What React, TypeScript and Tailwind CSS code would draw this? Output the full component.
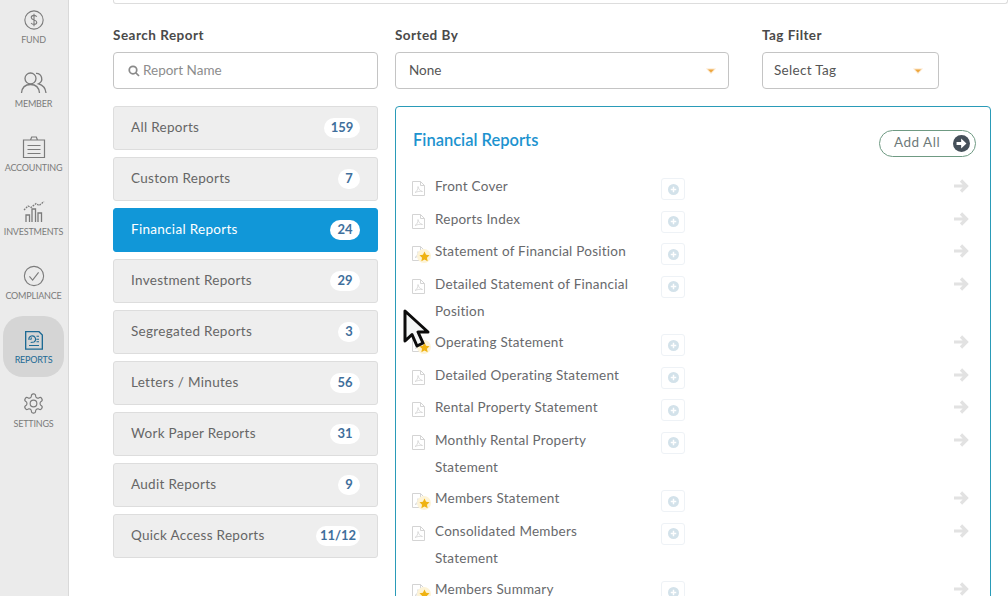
import { ReactNode } from 'react';

const font = { fontFamily: '"Lato", "Open Sans", sans-serif' };

type NavItem = { label: string; icon: ReactNode; active?: boolean };

const navItems: NavItem[] = [
  {
    label: 'FUND',
    icon: (
      <svg viewBox="0 0 24 24" className="h-[22px] w-[22px]" fill="none" stroke="currentColor" strokeWidth="1.2">
        <circle cx="12" cy="12" r="10" />
        <path d="M15 8.5c-.6-1-1.7-1.5-3-1.5-1.700 0-3 .9-3 2.400 0 3.200 6 1.800 6 5 0 1.500-1.300 2.400-3 2.400-1.400 0-2.500-.6-3.100-1.600M12 5.200v13.600" />
      </svg>
    ),
  },
  {
    label: 'MEMBER',
    icon: (
      <svg viewBox="0 0 28 24" className="h-[24px] w-[28px]" fill="none" stroke="currentColor" strokeWidth="1.3">
        <circle cx="10.500" cy="7.500" r="5.500" />
        <path d="M1.500 22c.5-5.500 4-8.500 9-8.500s8.500 3 9 8.500" />
        <path d="M16 2.300a5.500 5.500 0 0 1 2.500 10.500c4 1 7 4.200 7.500 9.200" />
      </svg>
    ),
  },
  {
    label: 'ACCOUNTING',
    icon: (
      <svg viewBox="0 0 24 24" className="h-[24px] w-[24px]" fill="none" stroke="currentColor" strokeWidth="1.2">
        <path d="M1.500 5h21v17.500h-21zM8.500 5l1.200-3h4.600l1.200 3M5.500 10.500h13M5.500 14.500h13M5.500 18.500h13" />
      </svg>
    ),
  },
  {
    label: 'INVESTMENTS',
    icon: (
      <svg viewBox="0 0 24 24" className="h-[24px] w-[24px]" fill="none" stroke="currentColor" strokeWidth="1.300">
        <path d="M4 23v-7h3.500v7M10 23V10h3.500v13M16 23v-9h3.500v9" />
        <path d="M2 11l4-4 3 1.500 5-4 3 2 5-4" strokeDasharray="1.800 1" />
      </svg>
    ),
  },
  {
    label: 'COMPLIANCE',
    icon: (
      <svg viewBox="0 0 24 24" className="h-[22px] w-[22px]" fill="none" stroke="currentColor" strokeWidth="1.200">
        <circle cx="12" cy="12" r="10.500" />
        <path d="M7 12.500l3.500 4L17 8" />
      </svg>
    ),
  },
  {
    label: 'REPORTS',
    active: true,
    icon: (
      <svg viewBox="0 0 24 24" className="h-[22px] w-[20px]" fill="none" stroke="currentColor" strokeWidth="1.600">
        <path d="M2 2h16l4 4v17H2z" />
        <path d="M6 12a4 4 0 1 1 6 2.500L8 15M9 9l-1 3M15 7.500h3M15 11h3M15 14h3M6 18.500h12" strokeWidth="1.300" />
      </svg>
    ),
  },
  {
    label: 'SETTINGS',
    icon: (
      <svg viewBox="0 0 24 24" className="h-[23px] w-[23px]" fill="none" stroke="currentColor" strokeWidth="1.200" strokeLinecap="round" strokeLinejoin="round">
        <path d="M12.220 2h-.44a2 2 0 0 0-2 2v.18a2 2 0 0 1-1 1.730l-.43.25a2 2 0 0 1-2 0l-.15-.08a2 2 0 0 0-2.730.73l-.22.380a2 2 0 0 0 .73 2.730l.15.1a2 2 0 0 1 1 1.720v.51a2 2 0 0 1-1 1.740l-.15.09a2 2 0 0 0-.73 2.730l.22.380a2 2 0 0 0 2.730.73l.15-.08a2 2 0 0 1 2 0l.43.25a2 2 0 0 1 1 1.730V20a2 2 0 0 0 2 2h.44a2 2 0 0 0 2-2v-.18a2 2 0 0 1 1-1.730l.43-.25a2 2 0 0 1 2 0l.15.08a2 2 0 0 0 2.730-.73l.22-.390a2 2 0 0 0-.73-2.730l-.15-.08a2 2 0 0 1-1-1.740v-.5a2 2 0 0 1 1-1.740l.15-.09a2 2 0 0 0 .73-2.730l-.22-.380a2 2 0 0 0-2.730-.73l-.15.08a2 2 0 0 1-2 0l-.43-.25a2 2 0 0 1-1-1.730V4a2 2 0 0 0-2-2z" />
        <circle cx="12" cy="12" r="3.500" />
      </svg>
    ),
  },
];

const categories = [
  { name: 'All Reports', count: '159', badge: 'w-[36px]' },
  { name: 'Custom Reports', count: '7', badge: 'w-[22px]' },
  { name: 'Financial Reports', count: '24', active: true, badge: 'w-[30px]' },
  { name: 'Investment Reports', count: '29', badge: 'w-[30px]' },
  { name: 'Segregated Reports', count: '3', badge: 'w-[22px]' },
  { name: 'Letters / Minutes', count: '56', badge: 'w-[30px]' },
  { name: 'Work Paper Reports', count: '31', badge: 'w-[30px]' },
  { name: 'Audit Reports', count: '9', badge: 'w-[22px]' },
  { name: 'Quick Access Reports', count: '11/12', badge: 'w-[44px]' },
];

const reports = [
  { name: 'Front Cover' },
  { name: 'Reports Index' },
  { name: 'Statement of Financial Position', star: true },
  { name: 'Detailed Statement of Financial Position' },
  { name: 'Operating Statement', star: true },
  { name: 'Detailed Operating Statement' },
  { name: 'Rental Property Statement' },
  { name: 'Monthly Rental Property Statement' },
  { name: 'Members Statement', star: true },
  { name: 'Consolidated Members Statement' },
  { name: 'Members Summary', star: true },
];

function Caret() {
  return (
    <svg viewBox="0 0 10 6" className="h-[6px] w-[10px]">
      <path d="M0 .5h10L5 6z" fill="#fbe3c4" />
      <path d="M2 1.500h6L5 4.500z" fill="#eda63c" />
    </svg>
  );
}

function PdfIcon({ star }: { star?: boolean }) {
  return (
    <div className="relative mt-[8px] h-[15px] w-[13px] shrink-0">
      <svg viewBox="0 0 13 15" className="h-[15px] w-[13px]" fill="none" stroke="#d4d4d4" strokeWidth="1">
        <path d="M.5.5h8l4 4v10H.500zM8.500.500v4h4" />
        <path d="M3 11.500c2-1 3-3.500 3-6 .5 2.500 2 4.500 4.500 5-2.500-.5-5 0-7.500 1z" strokeWidth=".8" />
      </svg>
      {star && (
        <div className="absolute left-[5px] top-[3px] flex h-[14px] w-[14px] items-center justify-center rounded-full bg-[#fdf3d6]">
          <svg viewBox="0 0 24 24" className="h-[11px] w-[11px]">
            <path d="M12 1l3.400 7.300 7.600.9-5.600 5.300 1.500 7.900L12 18.500l-6.900 3.900 1.500-7.900L1 9.200l7.600-.9z" fill="#efb211" />
          </svg>
        </div>
      )}
    </div>
  );
}

export default function App() {
  return (
    <div className="relative flex h-[596px] w-[1008px] overflow-hidden bg-white" style={font}>
      <aside className="flex w-[69px] shrink-0 flex-col items-center border-r border-[#d9d9d9] bg-[#ebebeb] pr-[1px]">
        <div className="flex flex-col items-center">
          {navItems.map((item) => (
            <div
              key={item.label}
              className={`flex h-[61px] w-[61px] mb-[3px] flex-col items-center justify-end pb-[11px] ${
                item.active ? 'rounded-[20px] bg-[#d5d5d5] text-[#1d6a94]' : 'text-[#7b7b7b]'
              } first:h-[56.500px]`}
            >
              {item.icon}
              <span className="mt-[3px] text-[9px] leading-[12px] whitespace-nowrap tracking-[-0.2px]">
                {item.label}
              </span>
            </div>
          ))}
        </div>
      </aside>

      <main className="flex-1 pl-[44px]">
        <div className="h-[4px] rounded-b-[3px] border border-t-0 border-[#dddddd]" />
        <div className="mt-[23px] flex">
          <div className="w-[265px] shrink-0">
            <label className="block text-[13.500px] leading-[17px] font-bold tracking-[0.5px] text-[#4a4a4a]">Search Report</label>
            <div className="mt-[8px] flex h-[37px] items-center rounded-[4px] border border-[#c4c4c4] pl-[14px] text-[13.500px] text-[#8d8d8d]">
              <svg viewBox="0 0 24 24" className="mr-[3px] h-[12px] w-[12px]" fill="none" stroke="#8a8a8a" strokeWidth="3.500">
                <circle cx="10" cy="10" r="7.500" />
                <path d="M15.500 15.500L22 22" />
              </svg>
              Report Name
            </div>
            <div className="mt-[17px] flex flex-col gap-[7px]">
              {categories.map((cat) => (
                <div
                  key={cat.name}
                  className={`flex h-[44px] items-center justify-between rounded-[3px] border pl-[17px] pr-[17px] text-[13.500px] tracking-[0.3px] ${
                    cat.active
                      ? 'border-[#1197d8] bg-[#1197d8] text-white'
                      : 'border-[#dddddd] bg-[#eeeeee] text-[#666666]'
                  }`}
                >
                  <span className="pb-[1px]">{cat.name}</span>
                  <span
                    className={`flex h-[20px] items-center justify-center rounded-full bg-white text-[13px] font-bold tracking-normal text-[#3f6f9c] ${cat.badge}`}
                  >
                    {cat.count}
                  </span>
                </div>
              ))}
            </div>
          </div>

          <div className="ml-[17px] w-[596px] shrink-0">
            <div className="flex">
              <div className="w-[334px]">
                <label className="block text-[13.500px] leading-[17px] font-bold tracking-[0.45px] text-[#4a4a4a]">Sorted By</label>
                <div className="mt-[8px] flex h-[37px] items-center justify-between rounded-[4px] border border-[#c4c4c4] pl-[13px] pr-[12px] text-[13.500px] text-[#555555]">
                  None
                  <Caret />
                </div>
              </div>
              <div className="ml-[33px] w-[177px]">
                <label className="block text-[13.500px] leading-[17px] font-bold tracking-[0.45px] text-[#4a4a4a]">Tag Filter</label>
                <div className="mt-[8px] flex h-[37px] items-center justify-between rounded-[4px] border border-[#c4c4c4] pl-[11px] pr-[15px] text-[13.500px] tracking-[0.3px] text-[#555555]">
                  Select Tag
                  <Caret />
                </div>
              </div>
            </div>

            <section className="mt-[17px] h-[600px] rounded-[4px] border border-[#2a9bb8] pl-[16px] pr-[14px]">
              <div className="flex items-start justify-between pt-[22px]">
                <h2 className="pl-[1px] text-[16.500px] leading-[22px] font-semibold text-[#1d93cf]">Financial Reports</h2>
                <button className="mt-[1px] flex h-[27px] w-[97px] items-center justify-between rounded-full border border-[#6f9a83] pl-[14px] pr-[5px] text-[13.500px] tracking-[0.5px] text-[#6e7a7a]">
                  <span className="pb-[2px]">Add All</span>
                  <svg viewBox="0 0 24 24" className="mb-[1px] h-[17px] w-[17px]">
                    <circle cx="12" cy="12" r="12" fill="#454f59" />
                    <path d="M5 10h6.500V5l7.500 7-7.500 7v-5H5z" fill="#ffffff" />
                  </svg>
                </button>
              </div>

              <div className="mt-[16px]">
                {reports.map((report) => (
                  <div key={report.name} className="flex min-h-[32.600px] items-start pb-[3.500px]">
                    <PdfIcon star={report.star} />
                    <div className="ml-[10px] w-[226px] shrink-0 pr-[20px] text-[13.500px] leading-[27.400px] tracking-[0.25px] text-[#68696c]">
                      {report.name}
                    </div>
                    <div className="mt-[5px] flex h-[22px] w-[24px] shrink-0 items-center justify-center rounded-[3px] border border-[#eef2f6]">
                      <svg viewBox="0 0 12 12" className="h-[11px] w-[11px]">
                        <circle cx="6" cy="6" r="6" fill="#d3e2ea" />
                        <path d="M6 3v6M3 6h6" stroke="#ffffff" strokeWidth="1.600" />
                      </svg>
                    </div>
                    <div className="flex-1" />
                    <svg viewBox="0 0 16 16" className="mr-[7px] mt-[5px] h-[16px] w-[16px]" fill="none" stroke="#e2e2e2" strokeWidth="3.200">
                      <path d="M1 8h12M8 2.500L13.500 8 8 13.500" />
                    </svg>
                  </div>
                ))}
              </div>
            </section>
          </div>
        </div>
      </main>

      <svg viewBox="0 0 28 40" className="absolute left-[403px] top-[309px] h-[40px] w-[28px]">
        <path
          d="M2 2v30l7-6.500 5 11.500 6-3-5-11h10z"
          fill="#f4f6f6"
          stroke="#0c0c0c"
          strokeWidth="3"
          strokeLinejoin="round"
        />
      </svg>
    </div>
  );
}
